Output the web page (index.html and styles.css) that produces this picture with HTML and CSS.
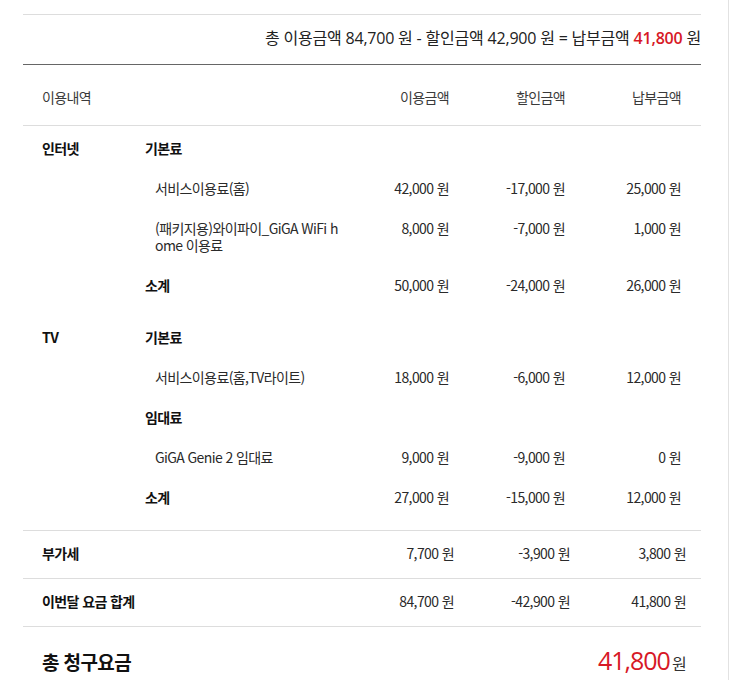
FILE: index.html
```html
<!doctype html>
<html lang="ko">
<head>
<meta charset="utf-8">
<meta name="viewport" content="width=device-width, initial-scale=1">
<title>요금 상세</title>
<link rel="stylesheet" href="styles.css">
</head>

<body>
<div class="frame">
<div class="bill">
	<div class="summary">총 이용금액 84,700 원 - 할인금액 42,900 원 = 납부금액 <strong class="red">41,800</strong> 원</div>

	<div class="row head">
		<span>이용내역</span>
		<span class="amt">이용금액</span>
		<span class="amt">할인금액</span>
		<span class="amt">납부금액</span>
	</div>

	<div class="detail">
		<div class="group">
			<div class="row">
				<span class="cat">인터넷</span>
				<span class="name sub">기본료</span>
			</div>
			<div class="row">
				<span class="cat"></span>
				<span class="name item">서비스이용료(홈)</span>
				<span class="amt">42,000 원</span>
				<span class="amt">-17,000 원</span>
				<span class="amt">25,000 원</span>
			</div>
			<div class="row">
				<span class="cat"></span>
				<span class="name item">(패키지용)와이파이_GiGA WiFi home 이용료</span>
				<span class="amt">8,000 원</span>
				<span class="amt">-7,000 원</span>
				<span class="amt">1,000 원</span>
			</div>
			<div class="row">
				<span class="cat"></span>
				<span class="name sub">소계</span>
				<span class="amt">50,000 원</span>
				<span class="amt">-24,000 원</span>
				<span class="amt">26,000 원</span>
			</div>
		</div>

		<div class="group">
			<div class="row">
				<span class="cat">TV</span>
				<span class="name sub">기본료</span>
			</div>
			<div class="row">
				<span class="cat"></span>
				<span class="name item">서비스이용료(홈,TV라이트)</span>
				<span class="amt">18,000 원</span>
				<span class="amt">-6,000 원</span>
				<span class="amt">12,000 원</span>
			</div>
			<div class="row">
				<span class="cat"></span>
				<span class="name sub">임대료</span>
			</div>
			<div class="row">
				<span class="cat"></span>
				<span class="name item">GiGA Genie 2 임대료</span>
				<span class="amt">9,000 원</span>
				<span class="amt">-9,000 원</span>
				<span class="amt">0 원</span>
			</div>
			<div class="row">
				<span class="cat"></span>
				<span class="name sub">소계</span>
				<span class="amt">27,000 원</span>
				<span class="amt">-15,000 원</span>
				<span class="amt">12,000 원</span>
			</div>
		</div>
	</div>

	<div class="row total">
		<span class="title">부가세</span>
		<span class="amt">7,700 원</span>
		<span class="amt">-3,900 원</span>
		<span class="amt">3,800 원</span>
	</div>
	<div class="row total">
		<span class="title">이번달 요금 합계</span>
		<span class="amt">84,700 원</span>
		<span class="amt">-42,900 원</span>
		<span class="amt">41,800 원</span>
	</div>

	<div class="grand">
		<span class="label">총 청구요금</span>
		<span class="sum"><em>41,800</em>원</span>
	</div>
</div>
</div>
</body>
</html>
```

FILE: styles.css
```css
body {
	margin: 0;
	background: #fff;
	color: #2a2a2a;
	font-family: "Noto Sans CJK KR", sans-serif;
	font-size: 14px;
}
.frame {
	width: 729px;
	min-height: 100vh;
	border-right: 1px solid #e2e2e2;
	box-sizing: border-box;
	padding: 14px 0 0 23px;
}
.bill {
	width: 678px;
	letter-spacing: -0.6px;
}
.summary {
	border-top: 1px solid #ddd;
	border-bottom: 1px solid #666;
	padding: 13px 0 16px;
	line-height: 20px;
	text-align: right;
	font-family: "Open Sans", "Noto Sans CJK KR", sans-serif;
	font-size: 16px;
	letter-spacing: -0.2px;
	color: #222;
}
.summary .red {
	color: #d71826;
	font-weight: 600;
}
.row {
	display: grid;
	grid-template-columns: 103px 204px 100px 116px 116px;
	padding: 12px 20px 11px 19px;
	line-height: 17px;
	align-items: start;
}
.row .amt {
	text-align: right;
}
.head {
	grid-template-columns: 307px 100px 116px 116px;
	padding: 22px 20px 18px 19px;
	line-height: 20px;
	border-bottom: 1px solid #ddd;
	color: #3a3a3a;
}
.detail {
	padding: 2px 0 13px;
	border-bottom: 1px solid #ddd;
}
.group + .group {
	margin-top: 12px;
}
.cat, .sub, .title, .label {
	font-weight: 700;
	color: #111;
}
.item {
	padding-left: 10px;
	width: 185px;
	word-break: break-all;
}
.total {
	grid-template-columns: 312px 100px 116px 116px;
	padding: 14px 15px 16px 19px;
	border-bottom: 1px solid #ddd;
}
.grand {
	display: flex;
	justify-content: space-between;
	align-items: baseline;
	padding: 18px 15px 0 19px;
	line-height: 30px;
}
.grand .label {
	font-size: 19px;
}
.grand .sum {
	font-size: 16px;
	color: #333;
}
.grand em {
	font-style: normal;
	font-family: "Open Sans", sans-serif;
	font-size: 25px;
	letter-spacing: -1px;
	color: #d71826;
	margin-right: 2px;
}
```
